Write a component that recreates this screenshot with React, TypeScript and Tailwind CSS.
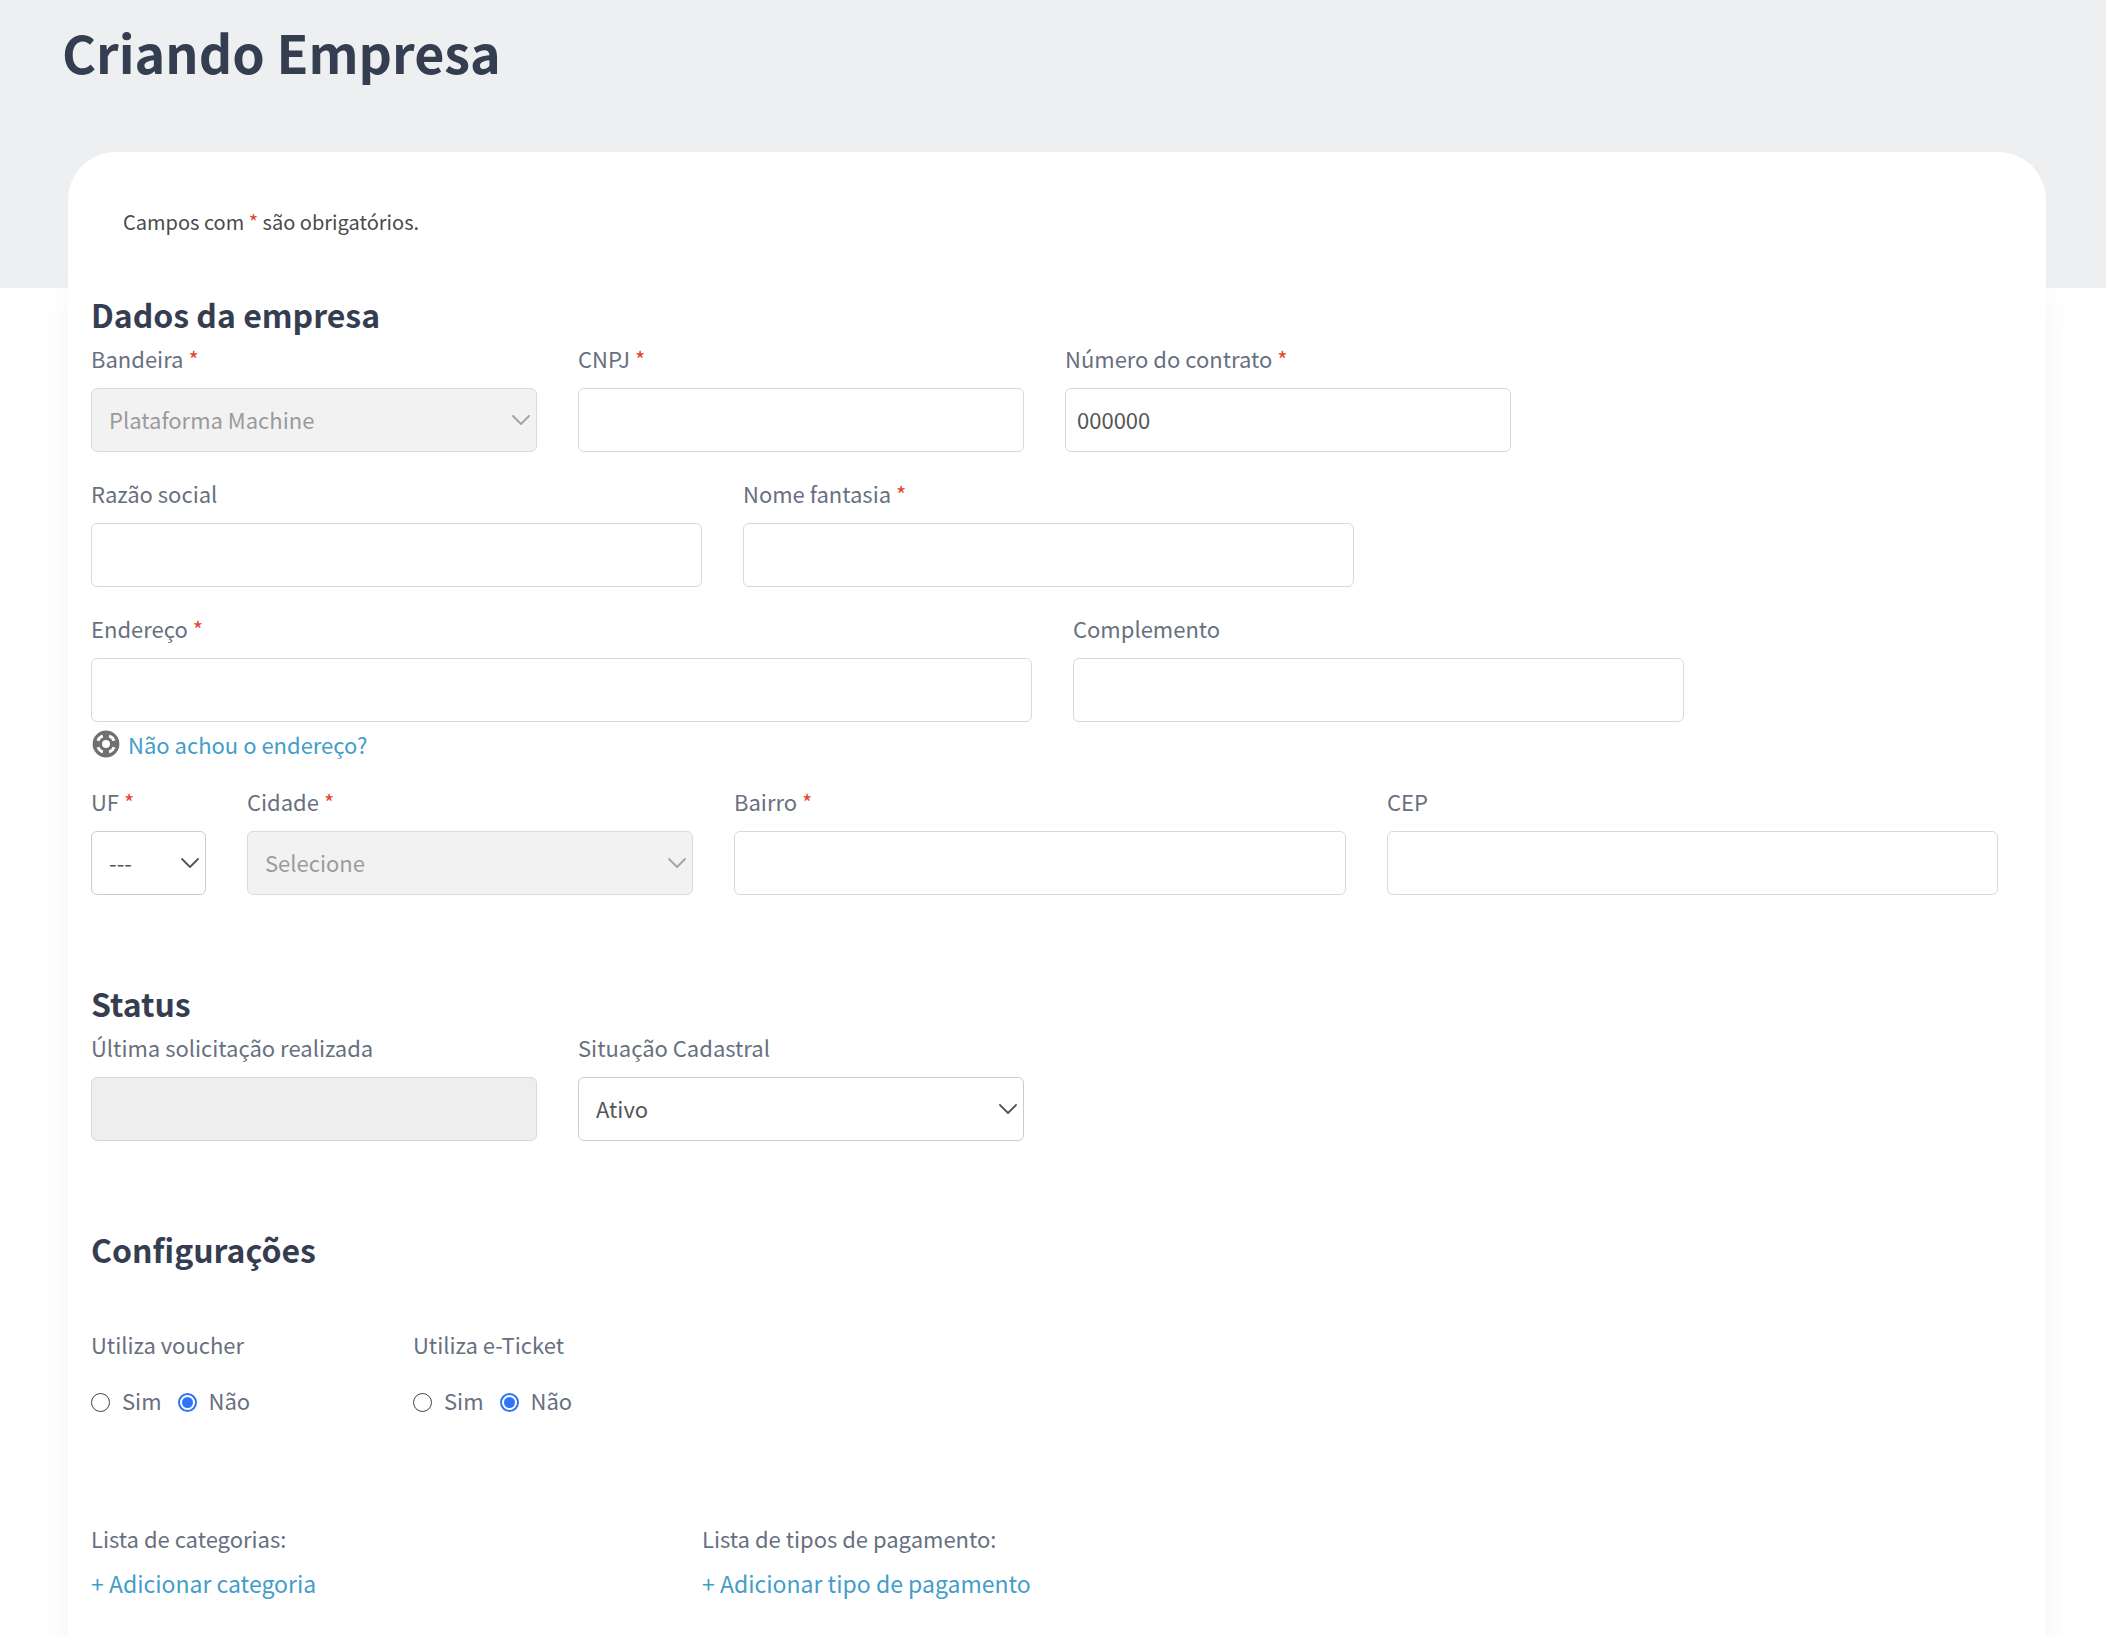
import { useId, useState, type ReactNode } from "react";

function Star() {
  return <span className="text-[#e5432e]">*</span>;
}

function Label({ htmlFor, required, children }: { htmlFor: string; required?: boolean; children: ReactNode }) {
  return (
    <label htmlFor={htmlFor} className="mb-2.5 block text-[22px] leading-10 whitespace-nowrap text-[#68707f]">
      {children}
      {required && <> <Star /></>}
    </label>
  );
}

function TextField({ label, required, value, disabled }: { label: string; required?: boolean; value?: string; disabled?: boolean }) {
  const id = useId();
  return (
    <div className="min-w-0">
      <Label htmlFor={id} required={required}>{label}</Label>
      <input
        id={id}
        type="text"
        defaultValue={value}
        disabled={disabled}
        className="block h-16 w-full rounded-md border border-[#d9d9d9] bg-white px-[11px] pb-0.5 text-[22px] text-[#555555] outline-none focus:border-[#4a9fcb] disabled:bg-[#eeeeee]"
      />
    </div>
  );
}

function SelectField({ label, required, options, disabled }: { label: string; required?: boolean; options: string[]; disabled?: boolean }) {
  const id = useId();
  return (
    <div className="min-w-0">
      <Label htmlFor={id} required={required}>{label}</Label>
      <div className="relative">
        <select
          id={id}
          disabled={disabled}
          className="block h-16 w-full appearance-none rounded-md border border-[#cccccc] bg-white pr-8 pb-0.5 pl-[17px] text-[22px] text-[#555555] opacity-100 outline-none focus:border-[#4a9fcb] disabled:border-[#dbdbdb] disabled:bg-[#f2f2f2] disabled:text-[#9b9b9b]"
        >
          {options.map((option) => (
            <option key={option}>{option}</option>
          ))}
        </select>
        <svg
          viewBox="0 0 18 10"
          className={`pointer-events-none absolute top-[27px] right-[7px] h-2.5 w-[18px] ${disabled ? "text-[#a3a3a3]" : "text-[#555555]"}`}
          fill="none"
          stroke="currentColor"
          strokeWidth="1.8"
          strokeLinecap="round"
          strokeLinejoin="round"
        >
          <path d="M1 1l8 8 8-8" />
        </svg>
      </div>
    </div>
  );
}

function YesNo({ label, name }: { label: string; name: string }) {
  const [value, setValue] = useState("Não");
  return (
    <fieldset>
      <legend className="mb-4 block text-[22px] leading-10 text-[#68707f]">{label}</legend>
      <div className="flex gap-4">
        {["Sim", "Não"].map((option) => (
          <label key={option} className="flex h-10 items-center gap-3 text-[22px] leading-10 text-[#68707f]">
            <input
              type="radio"
              name={name}
              checked={value === option}
              onChange={() => setValue(option)}
              className="mt-1 grid size-[19px] appearance-none place-items-center rounded-full border border-[#444444] bg-white before:size-[11px] before:rounded-full checked:border-2 checked:border-[#2f73f6] checked:before:bg-[#2f73f6]"
            />
            {option}
          </label>
        ))}
      </div>
    </fieldset>
  );
}

function SectionTitle({ children }: { children: ReactNode }) {
  return <h2 className="text-[32px] leading-12 font-bold text-[#343e50]">{children}</h2>;
}

function LifeRing() {
  return (
    <svg viewBox="0 0 28 28" className="size-7" fill="none" aria-hidden="true">
      <circle cx="14" cy="14" r="8.7" stroke="#707070" strokeWidth="9.4" />
      <path
        stroke="#ffffff"
        strokeWidth="3"
        d="M5.9 10.8A8.7 8.7 0 0 1 10.8 5.9M17.2 5.9A8.7 8.7 0 0 1 22.1 10.8M22.1 17.2A8.7 8.7 0 0 1 17.2 22.1M10.8 22.1A8.7 8.7 0 0 1 5.9 17.2"
      />
    </svg>
  );
}

function AddList({ label, action }: { label: string; action: string }) {
  return (
    <div>
      <p className="text-[22px] leading-10 text-[#68707f]">{label}</p>
      <a href="#" className="mt-[5px] block text-[23px] leading-10 text-[#439dca]">{action}</a>
    </div>
  );
}

export default function App() {
  return (
    <div className="flex min-h-screen flex-col bg-[linear-gradient(#eeeff1_288px,#ffffff_288px)] font-['Noto_Sans_CJK_SC',sans-serif]">
      <header className="h-38 pt-5 pl-[62px]">
        <h1 className="text-[52px] leading-16 font-bold text-[#343e50]">Criando Empresa</h1>
      </header>

      <main className="mr-15 ml-17 flex-1 rounded-t-[48px] bg-white pt-[50px] pr-12 pb-8 pl-[23px] shadow-[0_120px_30px_rgba(0,0,0,0.05)]">
        <p className="ml-8 text-[20px] leading-10 text-[#4a4a4a]">
          Campos com <Star /> são obrigatórios.
        </p>

        <section className="mt-12">
          <SectionTitle>Dados da empresa</SectionTitle>
          <div className="flex flex-col gap-[21px]">
            <div className="grid grid-cols-4 gap-x-[41px]">
              <SelectField label="Bandeira" required disabled options={["Plataforma Machine"]} />
              <TextField label="CNPJ" required />
              <TextField label="Número do contrato" required value="000000" />
            </div>
            <div className="grid grid-cols-[611fr_611fr_603fr] gap-x-[41px]">
              <TextField label="Razão social" />
              <TextField label="Nome fantasia" required />
            </div>
            <div>
              <div className="grid grid-cols-[941fr_611fr_273fr] gap-x-[41px]">
                <TextField label="Endereço" required />
                <TextField label="Complemento" />
              </div>
              <div className="mt-1.5 flex h-8 items-center gap-2 pl-px">
                <LifeRing />
                <a href="#" className="text-[22px] leading-8 text-[#439dca]">Não achou o endereço?</a>
              </div>
            </div>
            <div className="grid grid-cols-[115fr_446fr_612fr_611fr] gap-x-[41px]">
              <SelectField label="UF" required options={["---"]} />
              <SelectField label="Cidade" required disabled options={["Selecione"]} />
              <TextField label="Bairro" required />
              <TextField label="CEP" />
            </div>
          </div>
        </section>

        <section className="mt-21">
          <SectionTitle>Status</SectionTitle>
          <div className="grid grid-cols-4 gap-x-[41px]">
            <TextField label="Última solicitação realizada" disabled />
            <SelectField label="Situação Cadastral" options={["Ativo", "Inativo"]} />
          </div>
        </section>

        <section className="mt-21">
          <SectionTitle>Configurações</SectionTitle>
          <div className="mt-[51px] grid grid-cols-[322fr_1585fr]">
            <YesNo label="Utiliza voucher" name="voucher" />
            <YesNo label="Utiliza e-Ticket" name="eticket" />
          </div>
          <div className="mt-[98px] grid grid-cols-[611fr_1296fr]">
            <AddList label="Lista de categorias:" action="+ Adicionar categoria" />
            <AddList label="Lista de tipos de pagamento:" action="+ Adicionar tipo de pagamento" />
          </div>
        </section>
      </main>
    </div>
  );
}
